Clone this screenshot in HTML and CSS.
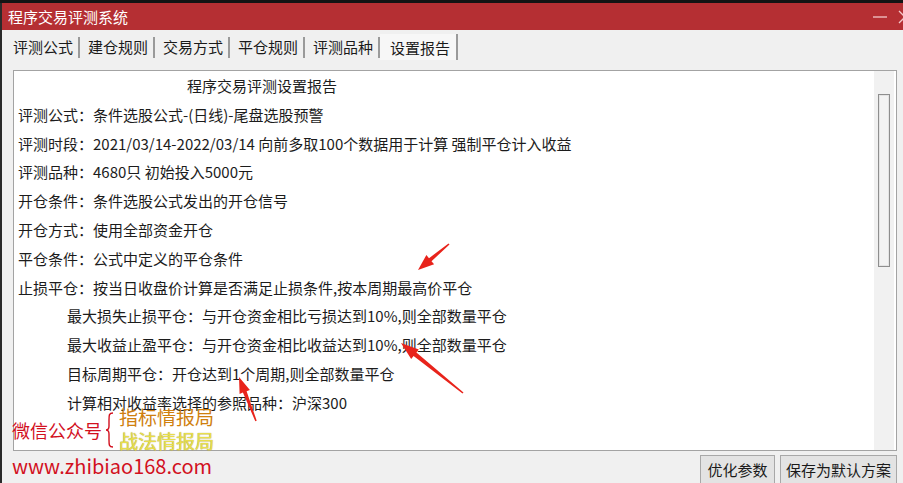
FILE: index.html
```html
<!DOCTYPE html>
<html lang="zh-CN">
<head>
    <meta charset="UTF-8">
    <title>程序交易评测系统</title>
    <link rel="stylesheet" href="styles.css">
</head>
<body>
    <div class="window">
        <!-- Title bar -->
        <div class="titlebar">
            <span class="title">程序交易评测系统</span>
            <div class="controls">
                <svg width="16" height="16" viewBox="0 0 16 16"><line x1="1" y1="8" x2="15" y2="8" stroke="#f3c9ca" stroke-width="1.3"/></svg>
                <svg width="16" height="16" viewBox="0 0 16 16"><path d="M2 2 L14 14 M14 2 L2 14" stroke="#f3c9ca" stroke-width="1.3"/></svg>
            </div>
        </div>

        <!-- Tabs -->
        <div class="tabs">
            <div class="tab">评测公式</div>
            <div class="tab">建仓规则</div>
            <div class="tab">交易方式</div>
            <div class="tab">平仓规则</div>
            <div class="tab">评测品种</div>
            <div class="tab active">设置报告</div>
        </div>

        <!-- Report panel -->
        <div class="panel">
            <div class="report">
                <div class="line heading">程序交易评测设置报告</div>
                <div class="line">评测公式：条件选股公式-(日线)-尾盘选股预警</div>
                <div class="line">评测时段：2021/03/14-2022/03/14 向前多取100个数据用于计算 强制平仓计入收益</div>
                <div class="line">评测品种：4680只 初始投入5000元</div>
                <div class="line">开仓条件：条件选股公式发出的开仓信号</div>
                <div class="line">开仓方式：使用全部资金开仓</div>
                <div class="line">平仓条件：公式中定义的平仓条件</div>
                <div class="line">止损平仓：按当日收盘价计算是否满足止损条件,按本周期最高价平仓</div>
                <div class="line sub">最大损失止损平仓：与开仓资金相比亏损达到10%,则全部数量平仓</div>
                <div class="line sub">最大收益止盈平仓：与开仓资金相比收益达到10%,则全部数量平仓</div>
                <div class="line sub">目标周期平仓：开仓达到1个周期,则全部数量平仓</div>
                <div class="line sub">计算相对收益率选择的参照品种：沪深300</div>
            </div>
            <div class="scrollbar">
                <div class="thumb"></div>
            </div>
        </div>

        <!-- Buttons -->
        <div class="actions">
            <button class="btn btn-opt">优化参数</button>
            <button class="btn btn-save">保存为默认方案</button>
        </div>
    </div>

    <!-- Watermark overlay -->
    <div class="watermark">
        <span class="wx">微信公众号</span>
        <svg class="brace" width="10" height="36" viewBox="0 0 10 36">
            <path d="M8 1 C4 1 4 3 4 8 L4 14 C4 17 3 18 1 18 C3 18 4 19 4 22 L4 28 C4 33 4 35 8 35" fill="none" stroke="#d2101e" stroke-width="1.4"/>
        </svg>
        <span class="name1">指标情报局</span>
        <span class="name2">战法情报局</span>
        <span class="site">www.zhibiao168.com</span>
    </div>

    <!-- Red arrows overlay -->
    <svg class="arrows" width="903" height="483" viewBox="0 0 903 483">
        <polygon points="448.5,243.5 429,258.2 426.4,255.1 418,270 434.1,264.3 431.5,261.2 449.5,244.5" fill="#e8231b"/>
        <polygon points="463.5,392.4 416.4,352.6 418.8,349.6 401,343 411.2,359 413.6,356 462.5,393.6" fill="#e8231b"/>
        <polygon points="256.7,420.7 246.6,391.2 249.9,389.9 239,377 239.6,393.9 242.9,392.6 255.3,421.3" fill="#e8231b"/>
    </svg>
</body>
</html>
```

FILE: styles.css
```css
body {
    margin: 0;
    width: 903px;
    height: 483px;
    overflow: hidden;
    background-color: #141414;
    font-family: "Noto Sans CJK SC", "Noto Sans", sans-serif;
    position: relative;
}

.window {
    margin-top: 3px;
    height: 480px;
    background-color: #f0f0f0;
    border-left: 2px solid #2a2a2a;
}

.titlebar {
    height: 27px;
    background-color: #b52f33;
    display: flex;
    align-items: center;
    justify-content: space-between;
    padding-left: 6px;
}

.title {
    color: #ffffff;
    font-size: 15px;
}

.controls {
    display: flex;
    gap: 9px;
    margin-right: -10px;
}

.tabs {
    display: flex;
    padding: 7px 0 0 3px;
}

.tab {
    height: 21px;
    line-height: 20px;
    font-size: 15px;
    color: #1a1a1a;
    padding: 0 5px 0 8px;
    border-right: 2px solid #9a9a9a;
}

.tab.active {
    padding: 0 6px 0 10px;
    background-color: #f7f7f7;
    height: 26px;
    margin-top: -3px;
    line-height: 27px;
}

.panel {
    margin: 10px 6px 0 11px;
    height: 379px;
    border: 1px solid #a3a3a3;
    background-color: #ffffff;
    display: flex;
}

.report {
    flex: 1;
    padding: 1px 0 0 4px;
    font-size: 15px;
    color: #1c1c1c;
}

.line {
    height: 28.8px;
    line-height: 28.8px;
    white-space: nowrap;
}

.heading {
    padding-left: 169px;
}

.sub {
    padding-left: 49px;
}

.scrollbar {
    width: 20px;
    margin-right: 2px;
    background-color: #f1f1f1;
    padding: 23px 0 0 4px;
    box-sizing: border-box;
}

.thumb {
    width: 10px;
    height: 171px;
    border: 1px solid #8e8e8e;
    box-shadow: inset 0 0 0 1px #e4e4e4;
    background-color: #f3f3f3;
}

.actions {
    display: flex;
    justify-content: flex-end;
    gap: 5px;
    margin: 4px 6px 0 0;
}

.btn {
    height: 29px;
    font-family: "Noto Sans CJK SC", "Noto Sans", sans-serif;
    font-size: 15px;
    color: #1a1a1a;
    background-color: #e3e3e3;
    border: 1px solid #a8a8a8;
    padding: 0;
}

.btn-opt {
    width: 75px;
}

.btn-save {
    width: 117px;
}

/* watermark */
.watermark {
    position: absolute;
    left: 0;
    top: 0;
}

.wx {
    position: absolute;
    left: 12px;
    top: 418px;
    font-size: 18px;
    line-height: 24px;
    color: #d2101e;
    white-space: nowrap;
}

.brace {
    position: absolute;
    left: 105px;
    top: 412px;
}

.name1,
.name2 {
    position: absolute;
    left: 119px;
    font-size: 19px;
    line-height: 24px;
    white-space: nowrap;
}

.name1 {
    top: 405px;
    color: #cf7f0e;
}

.name2 {
    top: 429px;
    color: #e8de4c;
    text-shadow: 0 0 1px #9a8a20;
}

.site {
    position: absolute;
    left: 12px;
    top: 453px;
    font-size: 20px;
    line-height: 26px;
    color: #d2101e;
    white-space: nowrap;
}

.arrows {
    position: absolute;
    left: 0;
    top: 0;
    pointer-events: none;
}
```
